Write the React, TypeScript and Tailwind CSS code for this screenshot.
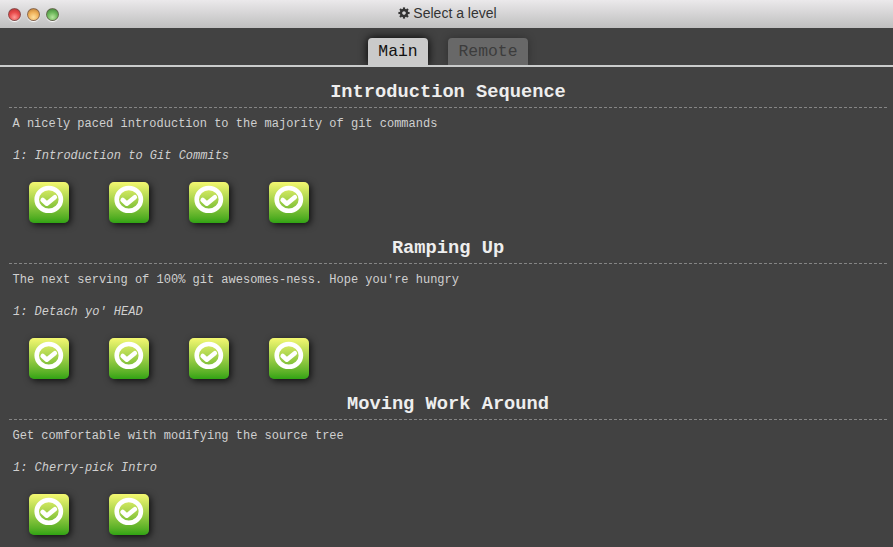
import React from "react";

type Sequence = { title: string; about: string; level: string; count: number };

const sequences: Sequence[] = [
  {
    title: "Introduction Sequence",
    about: "A nicely paced introduction to the majority of git commands",
    level: "1: Introduction to Git Commits",
    count: 4,
  },
  {
    title: "Ramping Up",
    about: "The next serving of 100% git awesomes-ness. Hope you're hungry",
    level: "1: Detach yo' HEAD",
    count: 4,
  },
  {
    title: "Moving Work Around",
    about: "Get comfortable with modifying the source tree",
    level: "1: Cherry-pick Intro",
    count: 2,
  },
];

const lights = [
  "bg-[radial-gradient(circle_at_50%_75%,#ff9a96,#e94b4b_50%,#b52f32)]",
  "bg-[radial-gradient(circle_at_50%_75%,#ffdf9c,#efb15a_50%,#b87a32)]",
  "bg-[radial-gradient(circle_at_50%_75%,#b6e59c,#6cb65a_50%,#3d8036)]",
];

function GearIcon() {
  return (
    <svg width="12" height="12" viewBox="-6 -6 12 12" fill="none" stroke="#333">
      <circle r="3" strokeWidth="2.4" />
      {[0, 45, 90, 135, 180, 225, 270, 315].map((angle) => (
        <path key={angle} d="M0 -3.6 V-5.6" strokeWidth="2.2" transform={`rotate(${angle})`} />
      ))}
    </svg>
  );
}

function LevelIcon() {
  return (
    <div className="h-[41px] w-10 rounded-[5px] bg-gradient-to-b from-[#f4f871] to-[#2fa313] shadow-[2px_2px_7px_rgba(0,0,0,0.75)]">
      <svg className="block" width="40" height="41" viewBox="0 0 40 41" fill="none" stroke="#fff">
        <ellipse cx="19.8" cy="17.4" rx="12.1" ry="11.4" strokeWidth="4.6" />
        <path d="M13.7 18 L17.8 21.7 L25.8 15.2" strokeWidth="4.6" strokeLinejoin="round" strokeLinecap="round" />
      </svg>
    </div>
  );
}

function TitleBar() {
  return (
    <header className="grid h-7 grid-cols-[1fr_auto_1fr] items-center bg-gradient-to-b from-[#ebe9eb] to-[#bfbfbf] pl-0.5">
      <div className="flex gap-1.5 pl-1.5">
        {lights.map((light) => (
          <span
            key={light}
            className={`h-[13px] w-[13px] rounded-full border border-[#67504e]/70 shadow-[0_1px_1px_#fff] ${light}`}
          />
        ))}
      </div>
      <h1 className="flex items-center gap-[3px] pb-[2px] font-['Liberation_Sans',Arial,sans-serif] text-[14px] leading-5 text-[#333]">
        <GearIcon />
        Select a level
      </h1>
    </header>
  );
}

export default function App() {
  return (
    <div className="h-[547px] overflow-hidden bg-[#424242] font-['Courier_New','Liberation_Mono',monospace]">
      <TitleBar />
      <nav className="flex h-[39px] items-end justify-center gap-5 border-b-2 border-[#cacccc] pl-[3px] text-[16.4px] leading-[27px]">
        <div className="h-[27px] w-[60px] rounded-t-[4px] bg-[#cacaca] text-center text-[#111] shadow-[0_0_10px_#000] [clip-path:inset(-12px_-12px_0)]">
          Main
        </div>
        <div className="h-[27px] w-20 rounded-t-[4px] bg-[#686868] text-center text-[#3c3c3c] shadow-[0_0_8px_rgba(0,0,0,0.3)] [clip-path:inset(-12px_-12px_0)]">
          Remote
        </div>
      </nav>
      <main className="pl-[9px] pr-[6px] pt-[9px] text-xs text-[#d0d0d0]">
        {sequences.map((s) => (
          <section key={s.title} className="h-[156px]">
            <h2 className="h-8 border-b border-dashed border-[#858585] text-center text-[18.72px] font-bold leading-[33px] text-[#eee]">
              {s.title}
            </h2>
            <p className="pl-[3.5px] pt-1.5 leading-5">{s.about}</p>
            <p className="pl-1 pt-3 italic leading-5">{s.level}</p>
            <div className="flex gap-10 pl-5 pt-4">
              {Array.from({ length: s.count }, (_, i) => (
                <LevelIcon key={i} />
              ))}
            </div>
          </section>
        ))}
      </main>
    </div>
  );
}
